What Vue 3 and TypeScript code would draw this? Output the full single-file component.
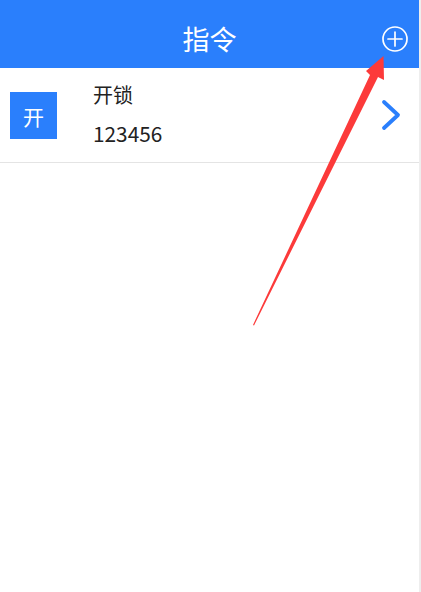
<template>
  <div class="page">
    <header class="nav">
      <span class="nav-title">指令</span>
      <svg class="add-icon" viewBox="0 0 26 26" width="26" height="26" fill="none" stroke="#fff" stroke-width="1.7">
        <circle cx="13" cy="13" r="12" />
        <path d="M13 6v14M6 13h14" stroke-linecap="round" />
      </svg>
    </header>
    <ul class="list">
      <li v-for="item in commands" :key="item.code" class="row">
        <div class="badge">{{ item.name.charAt(0) }}</div>
        <div class="info">
          <div class="name">{{ item.name }}</div>
          <div class="code">{{ item.code }}</div>
        </div>
        <svg class="chevron" viewBox="0 0 20 32" width="20" height="32" fill="none" stroke="#2a7ffc" stroke-width="3.800" stroke-linecap="round" stroke-linejoin="round">
          <path d="M3 3l14 13L3 29" />
        </svg>
      </li>
    </ul>
    <!-- annotation drawn over the screenshot -->
    <svg class="annotation" viewBox="0 0 421 592" width="421" height="592">
      <path d="M383.500 56L384 80L378 77L254 325.500L253 325L370 75L366 71Z" fill="#fc3a3a" />
    </svg>
  </div>
</template>

<script setup lang="ts">
interface Command {
  name: string
  code: string
}

const commands: Command[] = [{ name: '开锁', code: '123456' }]
</script>

<style>
html,
body {
  margin: 0;
  background: #eeeeee;
}
</style>

<style scoped>
.page {
  position: relative;
  width: 419px;
  height: 592px;
  background: #fff;
  font-family: "Noto Sans CJK SC", "Noto Sans", sans-serif;
}

.nav {
  display: flex;
  align-items: center;
  justify-content: center;
  position: relative;
  box-sizing: border-box;
  height: 68px;
  padding-top: 8px;
  background: #2a7ffc;
  color: #fff;
}

.nav-title {
  font-size: 27px;
}

.add-icon {
  position: absolute;
  right: 11px;
  top: 26px;
}

.list {
  margin: 0;
  padding: 0;
  list-style: none;
}

.row {
  display: flex;
  align-items: center;
  height: 94px;
  padding: 0 18px 0 10px;
  border-bottom: 1px solid #e4e4e4;
}

.badge {
  display: flex;
  align-items: center;
  justify-content: center;
  width: 47px;
  height: 47px;
  margin-top: 1px;
  background: #2a7ffc;
  color: #fff;
  font-size: 21px;
}

.info {
  flex: 1;
  margin-left: 36px;
  padding-bottom: 3px;
  color: #222;
  font-size: 20px;
}

.name {
  line-height: 28px;
  margin-bottom: 10px;
}

.code {
  line-height: 28px;
  font-size: 20.800px;
}

.annotation {
  position: absolute;
  left: 0;
  top: 0;
  pointer-events: none;
}
</style>
